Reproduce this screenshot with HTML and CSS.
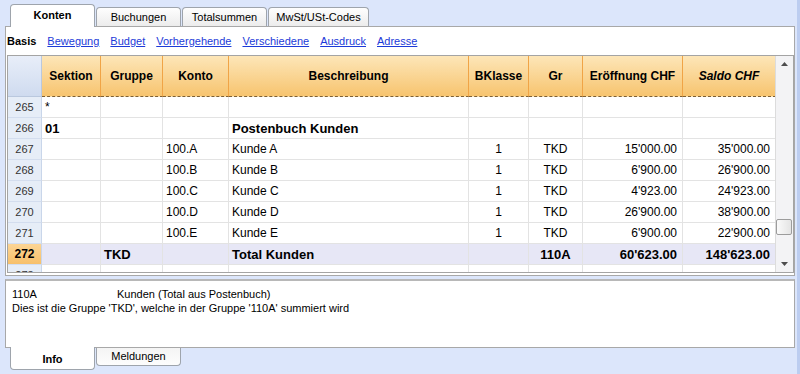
FILE: index.html
```html
<!DOCTYPE html>
<html lang="de">
<head>
    <meta charset="UTF-8">
    <title>Konten</title>
    <link rel="stylesheet" href="styles.css">
</head>
<body>
    <div class="window">
        <div class="tabs">
            <div class="tab active">Konten</div>
            <div class="tab">Buchungen</div>
            <div class="tab">Totalsummen</div>
            <div class="tab">MwSt/USt-Codes</div>
        </div>

        <div class="panel">
            <div class="views">
                <span class="current">Basis</span>
                <a href="#">Bewegung</a>
                <a href="#">Budget</a>
                <a href="#">Vorhergehende</a>
                <a href="#">Verschiedene</a>
                <a href="#">Ausdruck</a>
                <a href="#">Adresse</a>
            </div>

            <div class="grid">
                <div class="grid-body">
                    <table class="accounts">
                        <colgroup>
                            <col class="c-nr">
                            <col class="c-sektion">
                            <col class="c-gruppe">
                            <col class="c-konto">
                            <col class="c-beschr">
                            <col class="c-bklasse">
                            <col class="c-gr">
                            <col class="c-eroeff">
                            <col class="c-saldo">
                        </colgroup>
                        <thead>
                            <tr>
                                <th class="corner"></th>
                                <th>Sektion</th>
                                <th>Gruppe</th>
                                <th>Konto</th>
                                <th>Beschreibung</th>
                                <th>BKlasse</th>
                                <th>Gr</th>
                                <th>Eröffnung CHF</th>
                                <th class="italic">Saldo CHF</th>
                            </tr>
                        </thead>
                        <tbody>
                            <tr>
                                <td class="nr">265</td><td>*</td><td></td><td></td><td></td><td></td><td></td><td></td><td></td>
                            </tr>
                            <tr class="bold">
                                <td class="nr">266</td><td>01</td><td></td><td></td><td>Postenbuch Kunden</td><td></td><td></td><td></td><td></td>
                            </tr>
                            <tr>
                                <td class="nr">267</td><td></td><td></td><td>100.A</td><td>Kunde A</td><td class="center">1</td><td class="center">TKD</td><td class="num">15'000.00</td><td class="num">35'000.00</td>
                            </tr>
                            <tr>
                                <td class="nr">268</td><td></td><td></td><td>100.B</td><td>Kunde B</td><td class="center">1</td><td class="center">TKD</td><td class="num">6'900.00</td><td class="num">26'900.00</td>
                            </tr>
                            <tr>
                                <td class="nr">269</td><td></td><td></td><td>100.C</td><td>Kunde C</td><td class="center">1</td><td class="center">TKD</td><td class="num">4'923.00</td><td class="num">24'923.00</td>
                            </tr>
                            <tr>
                                <td class="nr">270</td><td></td><td></td><td>100.D</td><td>Kunde D</td><td class="center">1</td><td class="center">TKD</td><td class="num">26'900.00</td><td class="num">38'900.00</td>
                            </tr>
                            <tr>
                                <td class="nr">271</td><td></td><td></td><td>100.E</td><td>Kunde E</td><td class="center">1</td><td class="center">TKD</td><td class="num">6'900.00</td><td class="num">22'900.00</td>
                            </tr>
                            <tr class="bold total">
                                <td class="nr selected">272</td><td></td><td>TKD</td><td></td><td>Total Kunden</td><td></td><td class="center">110A</td><td class="num">60'623.00</td><td class="num">148'623.00</td>
                            </tr>
                            <tr>
                                <td class="nr">273</td><td></td><td></td><td></td><td></td><td></td><td></td><td></td><td></td>
                            </tr>
                        </tbody>
                    </table>
                </div>
                <div class="scrollbar">
                    <div class="arrow">
                        <svg width="7" height="4" viewBox="0 0 7 4"><path d="M0 4 L3.5 0 L7 4 Z" fill="#4d4d4d"/></svg>
                    </div>
                    <div class="track">
                        <div class="thumb"></div>
                    </div>
                    <div class="arrow">
                        <svg width="7" height="4" viewBox="0 0 7 4"><path d="M0 0 L3.5 4 L7 0 Z" fill="#4d4d4d"/></svg>
                    </div>
                </div>
            </div>
        </div>

        <div class="info">
            <div class="info-line"><span class="info-code">110A</span><span>Kunden (Total aus Postenbuch)</span></div>
            <div class="info-line">Dies ist die Gruppe 'TKD', welche in der Gruppe '110A' summiert wird</div>
        </div>

        <div class="tabs bottom">
            <div class="tab active">Info</div>
            <div class="tab">Meldungen</div>
        </div>
    </div>
</body>
</html>
```

FILE: styles.css
```css
body {
    margin: 0;
    padding: 0;
    background-color: #dce6fb;
    font-family: "Liberation Sans", Arial, sans-serif;
    font-size: 11px;
    color: #000;
    height: 374px;
    overflow: hidden;
    border-right: 3px solid #bccdf0;
    box-sizing: border-box;
}

.window {
    padding: 5px 2px 0 5px;
}

/* tab strips */

.tabs {
    display: flex;
    align-items: flex-end;
    height: 21px;
    padding-left: 5px;
    position: relative;
    z-index: 1;
}

.tab {
    width: 83px;
    height: 18px;
    line-height: 18px;
    margin-right: 1px;
    text-align: center;
    border: 1px solid #9ea4ac;
    border-bottom: none;
    border-radius: 4px 4px 0 0;
    background: linear-gradient(#fefefe, #ececec);
}

.tab:last-child {
    width: 99px;
}

.tab.active {
    height: 22px;
    line-height: 20px;
    margin-bottom: -1px;
    background: #fff;
    font-weight: bold;
}

.tabs.bottom {
    align-items: flex-start;
    height: 24px;
}

.tabs.bottom .tab {
    width: 83px;
    height: 17px;
    line-height: 16px;
    border: 1px solid #9ea4ac;
    border-top: none;
    border-radius: 0 0 4px 4px;
    background: linear-gradient(#f4f4f4, #fdfdfd);
}

.tabs.bottom .tab.active {
    height: 22px;
    line-height: 24px;
    margin-top: -1px;
    margin-bottom: 0;
    background: #fff;
}

/* main panel */

.panel {
    background: #fff;
    border: 1px solid #a8a8a8;
    height: 248px;
}

.views {
    display: flex;
    align-items: center;
    height: 28px;
    padding-left: 1px;
}

.views .current {
    font-weight: bold;
    margin-right: 11px;
}

.views a {
    color: #1c3ad8;
    text-decoration: underline;
    margin-right: 11px;
}

.grid {
    display: flex;
    margin-left: 1px;
    height: 216px;
    border: 1px solid #a4a4a4;
}

.grid-body {
    width: 768px;
    overflow: hidden;
}

.accounts {
    table-layout: fixed;
    border-collapse: separate;
    border-spacing: 0;
    width: 768px;
    font-size: 12px;
}

.c-nr { width: 34px; }
.c-sektion { width: 59px; }
.c-gruppe { width: 62px; }
.c-konto { width: 66px; }
.c-beschr { width: 240px; }
.c-bklasse { width: 60px; }
.c-gr { width: 54px; }
.c-eroeff { width: 100px; }
.c-saldo { width: 93px; }

.accounts th {
    box-sizing: border-box;
    height: 41px;
    padding: 0;
    font-weight: bold;
    text-align: center;
    background: linear-gradient(#fde6b8, #f7c46f);
    border-right: 1px solid #f0a446;
    border-bottom: 1px dashed #7d5f34;
}

.accounts th.corner {
    background: linear-gradient(#e8eef9, #cfdbef);
    border-right: 1px solid #bac8de;
    border-bottom: 1px solid #bac8de;
}

.accounts th.italic {
    font-style: italic;
}

.accounts td {
    box-sizing: border-box;
    height: 21px;
    padding: 0 3px;
    white-space: nowrap;
    overflow: hidden;
    border-right: 1px solid #e3e3e3;
    border-bottom: 1px solid #e3e3e3;
}

.accounts td.nr {
    padding: 0;
    text-align: center;
    font-size: 11px;
    font-weight: normal;
    color: #333;
    background: #e6edf7;
    border-right: 1px solid #c9d6ea;
    border-bottom: 1px solid #d3ddee;
}

.accounts td.center {
    text-align: center;
}

.accounts td.num {
    text-align: right;
    padding-right: 5px;
}

.accounts tr.bold td {
    font-weight: bold;
    font-size: 13px;
}

.accounts tr.bold td.nr {
    font-weight: normal;
    font-size: 11px;
}

.accounts tr.total td {
    background: #e7e7f6;
}

.accounts tr.total td.nr.selected {
    background: linear-gradient(#fcd595, #f7c06a);
    color: #000;
    font-weight: bold;
    font-size: 12px;
}

/* scrollbar */

.scrollbar {
    display: flex;
    flex-direction: column;
    width: 17px;
    background: #f3f3f5;
    border-left: 1px solid #dcdcdc;
}

.arrow {
    height: 16px;
    display: flex;
    align-items: center;
    justify-content: center;
}

.track {
    flex: 1;
    position: relative;
}

.thumb {
    position: absolute;
    left: 0;
    right: 1px;
    top: 147px;
    height: 16px;
    border: 1px solid #9c9c9c;
    border-radius: 2px;
    background: linear-gradient(90deg, #fafafa, #e4e4e4);
    box-sizing: border-box;
}

/* info panel */

.info {
    margin-top: 3px;
    height: 69px;
    background: #fff;
    border: 1px solid #a8a8a8;
    border-top: 2px solid #b8b8b8;
    padding: 6px 6px 0 6px;
    box-sizing: border-box;
    line-height: 14px;
}

.info-code {
    display: inline-block;
    width: 105px;
}
```
